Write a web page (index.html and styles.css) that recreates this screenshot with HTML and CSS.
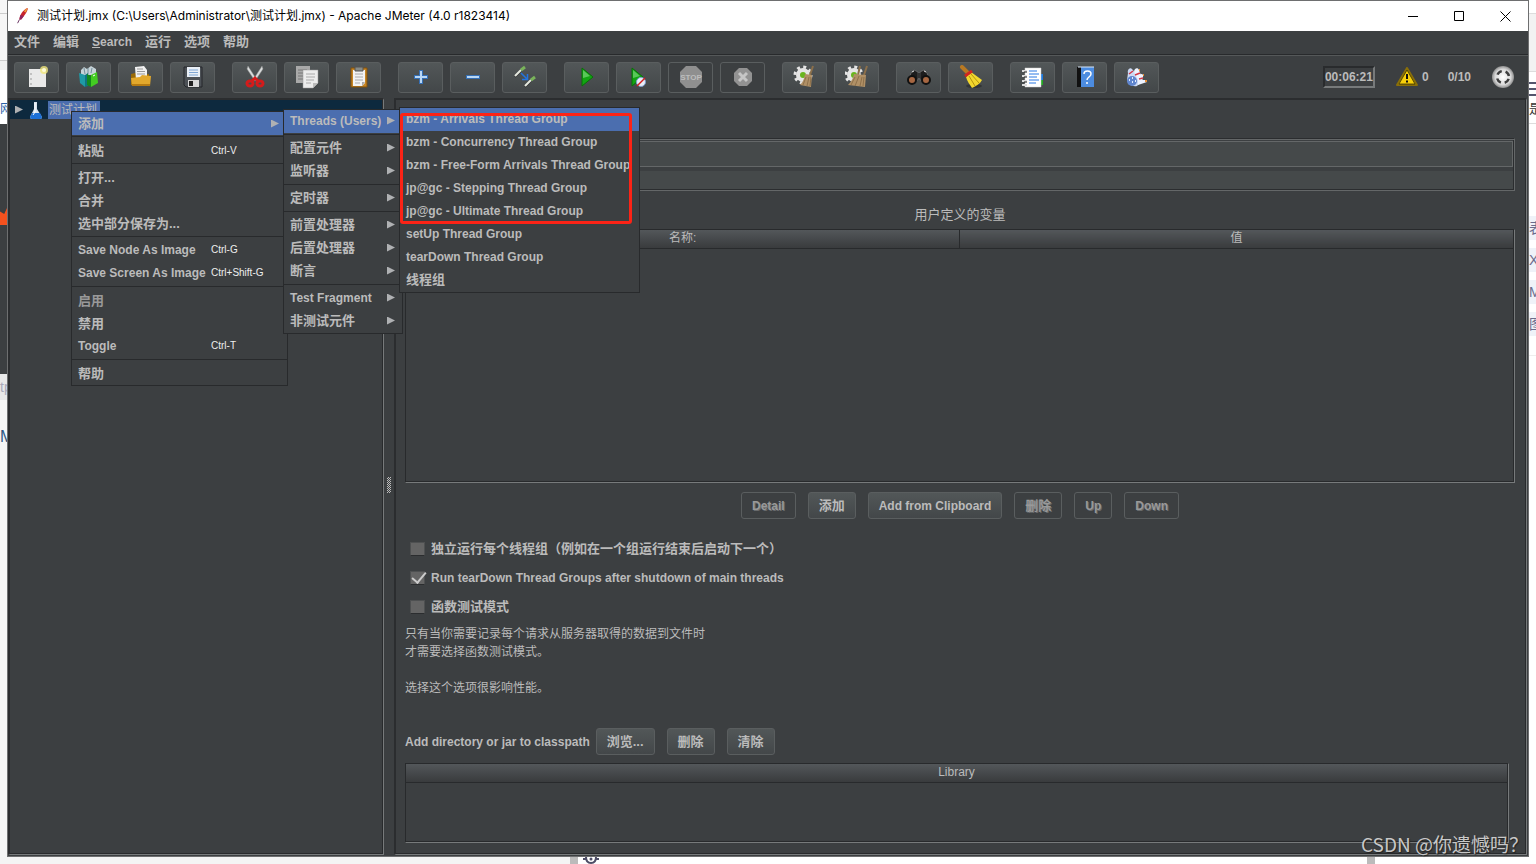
FILE: index.html
```html
<!DOCTYPE html>
<html lang="zh-CN">
<head>
<meta charset="utf-8">
<title>测试计划.jmx - Apache JMeter</title>
<link rel="stylesheet" href="styles.css">
</head>
<body>
<div class="desktop">
  <div class="strip-left">
    <div class="sl-top"></div>
    <div class="sl-mid"></div>
    <div class="sl-cut">网</div>
    <div class="sl-dark"><i class="flame"></i></div>
    <div class="sl-grey">tp</div>
    <div class="sl-page">M</div>
  </div>

  <div class="window">
    <header class="titlebar">
      <svg class="feather" viewBox="0 0 16 20"><path d="M13 1c1 1-1 5-4 9L6 14l-2 0C4 9 8 3 13 1z" fill="#c8232c"/><path d="M13 1c-2 1-3 2-4 4l2 1c1-2 2-4 2-5z" fill="#ef9a35"/><path d="M5 9l-1 5 2 0 3-4z" fill="#8e2460"/><path d="M4 14l-2 4" stroke="#5b2355" fill="none"/></svg>
      <span class="title">测试计划.jmx (C:\Users\Administrator\测试计划.jmx) - Apache JMeter (4.0 r1823414)</span>
      <button class="wbtn" aria-label="Minimize"><svg viewBox="0 0 11 11"><path d="M0 5.500h10" stroke="#000"/></svg></button>
      <button class="wbtn" aria-label="Maximize"><svg viewBox="0 0 11 11"><path d="M.5.500h9v9h-9z" stroke="#000" fill="none"/></svg></button>
      <button class="wbtn" aria-label="Close"><svg viewBox="0 0 11 11"><path d="M.5.500l10 10M10.500.500l-10 10" stroke="#000"/></svg></button>
    </header>

    <nav class="menubar">
      <button class="zh">文件</button><button class="zh">编辑</button><button><u>S</u>earch</button><button class="zh">运行</button><button class="zh">选项</button><button class="zh">帮助</button>
    </nav>

    <div class="toolbar">
      <div class="tgroup">
        <button class="tool" aria-label="New"><svg viewBox="0 0 24 24"><path d="M4 4h17v18H4z" fill="#e9e9e9"/><path d="M6 8v2M6 13v2M6 18v2" stroke="#999"/><circle cx="19" cy="5" r="4" fill="#f0e67c" opacity=".8"/><circle cx="19" cy="5" r="2" fill="#fffbd8"/></svg></button>
        <button class="tool" aria-label="Templates"><svg viewBox="0 0 24 24"><path d="M4 5l3-3 3 2 4-3 5 3v6H4z" fill="#c6d3d8"/><path d="M7 3l1 6M11 3v6M15 3l-1 5" stroke="#75909b"/><path d="M2 8l6 2v12l-5-4z" fill="#1f9aa6"/><path d="M8 10l3-2v13l-3 1z" fill="#117482"/><path d="M10 9l4 2v11l-4-2z" fill="#148b1d"/><path d="M14 10l6-3 1 11-7 4z" fill="#43cc22"/><path d="M16 11l2-1" stroke="#fff"/></svg></button>
        <button class="tool" aria-label="Open"><svg viewBox="0 0 24 24"><path d="M2 9l4-1 14 1v11H2z" fill="#9a6a08"/><path d="M6 2l9-1 3 4v10H7z" fill="#f2f2f2"/><path d="M8 4h6M8 6.500h8M8 9h8" stroke="#999"/><path d="M2 13l9-1 2-2 9 1-1 10H3z" fill="#e2a82c"/><path d="M3 20h18" stroke="#b67b12" stroke-width="2"/></svg></button>
        <button class="tool" aria-label="Save"><svg viewBox="0 0 24 24"><path d="M3 2h18v20H5l-2-2z" fill="#4c5156" stroke="#24272a"/><path d="M6 2h13v10H6z" fill="#e9eff6"/><path d="M8 5h9M8 7.500h9M8 10h9" stroke="#7fa6d4"/><path d="M7 15h11v7H7z" fill="#dadada"/><path d="M8 16h4v5H8z" fill="#222"/></svg></button>
      </div>
      <div class="tgroup">
        <button class="tool" aria-label="Cut"><svg viewBox="0 0 24 24"><path d="M5 1l9 14-2 1L4 4zM19 1l-9 14 2 1 8-12z" fill="#d9dcdc" stroke="#888" stroke-width=".5"/><g fill="none" stroke="#d41b1b" stroke-width="3"><ellipse cx="7" cy="18.500" rx="3" ry="2.500"/><ellipse cx="17" cy="18.500" rx="3" ry="2.500"/><path d="M9 16l3-3 3 3"/></g></svg></button>
        <button class="tool" aria-label="Copy"><svg viewBox="0 0 24 24"><path d="M1 1h14v17H1z" fill="#a9a9a9"/><path d="M3 5h9M3 8h5M3 11h5M3 14h5" stroke="#777"/><path d="M8 5h15v13l-5 5H8z" fill="#ececec" stroke="#999" stroke-width=".5"/><path d="M11 9h9M11 12h9M11 15h8M11 18h5" stroke="#aaa"/><path d="M18 23v-5h5z" fill="#bbb"/></svg></button>
        <button class="tool" aria-label="Paste"><svg viewBox="0 0 24 24"><path d="M4 3h16v19H4z" fill="#c68524" stroke="#80500d"/><path d="M6 5h12v13l-3 3H6z" fill="#f3f3f3"/><path d="M8 2h8v4H8z" fill="#878b87" stroke="#555"/><path d="M8 9h8M8 12h8M8 15h8M8 18h5" stroke="#aaa"/><path d="M15 21v-4h3z" fill="#aaa"/></svg></button>
      </div>
      <div class="tgroup">
        <button class="tool" aria-label="Expand"><svg viewBox="0 0 24 24"><path d="M12 5v14M5 12h14" stroke="#356fb5" stroke-width="4"/><path d="M12 6v12M6 12h12" stroke="#b9d7f5" stroke-width="2"/></svg></button>
        <button class="tool" aria-label="Collapse"><svg viewBox="0 0 24 24"><path d="M5 12h14" stroke="#356fb5" stroke-width="4"/><path d="M6 12h12" stroke="#b9d7f5" stroke-width="2"/></svg></button>
        <button class="tool" aria-label="Toggle"><svg viewBox="0 0 24 24"><path d="M2 12l6-6M12 22l6-6" stroke="#222" stroke-width="1.500"/><path d="M2 11l6-6M12 21l6-6" stroke="#e5e8df" stroke-width="2"/><path d="M8 5l4-3M18 15l4-3" stroke="#79b35a" stroke-width="3"/><path d="M8 8l6 6M14.500 9v5.500H9" stroke="#2474df" stroke-width="1.500" fill="none"/></svg></button>
      </div>
      <div class="tgroup">
        <button class="tool" aria-label="Start"><svg viewBox="0 0 24 24"><path d="M7 3l11 9L7 21z" fill="#12a512" stroke="#087008"/><path d="M8 5l7 6-7 2z" fill="#59c759"/></svg></button>
        <button class="tool" aria-label="Start no pauses"><svg viewBox="0 0 24 24"><path d="M5 3l11 9-11 9z" fill="#12a512" stroke="#087008"/><path d="M6 5l7 6-7 2z" fill="#59c759"/><circle cx="14" cy="17" r="4.500" fill="#e8eef8" stroke="#7e9ccc"/><path d="M10 21l8-8" stroke="#d61d1d" stroke-width="1.500"/></svg></button>
        <button class="tool" disabled aria-label="Stop"><svg viewBox="0 0 24 24"><path d="M7 1h10l6 6v10l-6 6H7l-6-6V7z" fill="#8f8f8f"/><text x="12" y="15" text-anchor="middle" class="stoptext">STOP</text></svg></button>
        <button class="tool" disabled aria-label="Shutdown"><svg viewBox="0 0 24 24"><path d="M8 3h8l5 5v8l-5 5H8l-5-5V8z" fill="#929292"/><path d="M8 8l8 8M16 8l-8 8" stroke="#c6c6c6" stroke-width="3"/></svg></button>
      </div>
      <div class="tgroup">
        <button class="tool" aria-label="Clear"><svg viewBox="0 0 24 24"><circle cx="10" cy="10" r="7" fill="#e5e5e5"/><circle cx="10" cy="10" r="8" fill="none" stroke="#e5e5e5" stroke-width="3" stroke-dasharray="3 3.280"/><circle cx="10" cy="10" r="3" fill="#69b51e"/><path d="M20 1l-3 9" stroke="#8b6f4a" stroke-width="2"/><path d="M12 9l7 1-1 12L7 20c4-4 4-7 5-11z" fill="#b09066"/><path d="M13 12l-3 8M16 12l-2 9M18 12l-1 9" stroke="#80633f" stroke-width=".7"/></svg></button>
        <button class="tool" aria-label="Clear all"><svg viewBox="0 0 24 24"><circle cx="9" cy="10" r="7" fill="#e5e5e5"/><circle cx="9" cy="10" r="8" fill="none" stroke="#e5e5e5" stroke-width="3" stroke-dasharray="3 3.280"/><circle cx="9" cy="10" r="3" fill="#69b51e"/><path d="M15 1l-2 9M22 1l-3 9" stroke="#8b6f4a" stroke-width="2"/><path d="M9 9l12 1-1 12L3 20c4-4 5-7 6-11z" fill="#b09066"/><path d="M10 12l-4 8M14 11l-4 10M17 12l-2 9M19 12l-1 9" stroke="#80633f" stroke-width=".7"/></svg></button>
      </div>
      <div class="tgroup">
        <button class="tool" aria-label="Search"><svg viewBox="0 0 24 24"><path d="M4 8l3-3 4 2v8H2zM20 8l-3-3-4 2v8h9z" fill="#1d1d1d" stroke="#777" stroke-width=".7"/><path d="M10 8h4v5h-4z" fill="#333"/><circle cx="5" cy="15" r="4" fill="#a76742" stroke="#111" stroke-width="2"/><circle cx="19" cy="15" r="4" fill="#a76742" stroke="#111" stroke-width="2"/><path d="M5 7l2-1M17 6l2 1" stroke="#ddd"/></svg></button>
        <button class="tool" aria-label="Reset search"><svg viewBox="0 0 24 24"><ellipse cx="15" cy="21" rx="8" ry="2" fill="#333638"/><path d="M3 2l6 6" stroke="#b87923" stroke-width="4" stroke-linecap="round"/><path d="M7 12l5-5 11 8c-2 4-6 6-10 8-2-3-5-7-6-11z" fill="#f2d72d"/><path d="M10 11l6 10M12 9l8 9" stroke="#b5930d"/><path d="M6 11l7-5" stroke="#cf261f" stroke-width="3"/></svg></button>
      </div>
      <div class="tgroup">
        <button class="tool" aria-label="Function helper"><svg viewBox="0 0 24 24"><path d="M18 9h4v6h-4z" fill="#1e7be0"/><path d="M18 15h4v5h-4z" fill="#22a922"/><path d="M4 3h16v19H4z" fill="#fff" stroke="#ccc" stroke-width=".5"/><path d="M8 6h8M8 9h10M8 12h8M8 15h10M8 18h7" stroke="#2a79e4"/><path d="M1 6h5M1 11h5M1 16h5M1 20h5" stroke="#ddd" stroke-width="2"/><path d="M3 7h3M3 12h3M3 17h3" stroke="#222"/></svg></button>
        <button class="tool" aria-label="Help"><svg viewBox="0 0 24 24"><path d="M4 2h4v20H4z" fill="#111"/><path d="M8 2h13v20H8z" fill="#4c8ce0"/><path d="M5 2h16" stroke="#d9e6f5"/><path d="M11 9c0-4 7-4 7 0 0 3-4 3-4 6M14 17v2" stroke="#fff" stroke-width="1.500" fill="none"/></svg></button>
        <button class="tool" aria-label="What's new"><svg viewBox="0 0 24 24"><path d="M3 8c-1-3 2-6 4-4l10 12-5 5c-5 1-9-2-10-6z" fill="#cbd9f4"/><path d="M9 7c0-4 4-5 5-2l4 11-5-1zM13 12c2-4 6-4 5 0l-1 5-4-2zM13 15l9 0 0 2-9 3z" fill="#eef3ff"/><circle cx="7" cy="16" r="5" fill="#6086ce"/><path d="M4 15h1M7 13h1M7 17h1M10 16h1" stroke="#e2edff" stroke-width="2"/><path d="M4 9l4-3M10 10l5-2M14 14l4-1" stroke="#d33a49" stroke-width="1.500"/><path d="M20 16h2M14 5h1M18 10h1" stroke="#e88d35" stroke-width="2"/></svg></button>
      </div>
      <div class="status">
        <span class="timer">00:06:21</span>
        <span class="warn"><svg viewBox="0 0 22 20"><path d="M11 1l10 17H1z" fill="#f8cf0a" stroke="#8a6f08" stroke-width="2" stroke-linejoin="round"/><path d="M11 3l8 14H3z" fill="none" stroke="#3a3200" stroke-width=".8"/><path d="M11 7v5M11 13.500v2" stroke="#111" stroke-width="2"/></svg>0</span>
        <span class="threads">0/10</span>
        <svg class="globe" viewBox="0 0 22 22"><defs><radialGradient id="ball"><stop offset="0" stop-color="#fff"/><stop offset=".7" stop-color="#dadada"/><stop offset="1" stop-color="#8f8f8f"/></radialGradient></defs><circle cx="11" cy="11" r="11" fill="url(#ball)"/><circle cx="11" cy="11" r="6" fill="none" stroke="#3d3d3d" stroke-width="2.500" stroke-dasharray="5.400 4.020" stroke-dashoffset="-2"/></svg>
      </div>
    </div>

    <div class="split">
      <aside class="tree">
        <div class="node">
          <i class="arrow"></i>
          <svg class="flask" viewBox="0 0 14 18"><path d="M5 1h3v7l5 8q0 2-2 2H3q-2 0-2-2l4-8z" fill="#d9e3ed"/><path d="M3 12h8l2 4q0 2-2 2H3q-2 0-2-2z" fill="#1d70d6"/><path d="M6 2v9l-2 3" stroke="#fff" fill="none"/></svg>
          <span class="nodename">测试计划</span>
        </div>
      </aside>
      <div class="divider"><i class="grip"></i></div>
      <main class="panel">
        <div class="namebox">
          <input type="text" aria-label="名称">
          <input type="text" class="plain" aria-label="注释">
        </div>
        <h2 class="caption">用户定义的变量</h2>
        <div class="grid vars">
          <table><thead><tr><th>名称:</th><th>值</th></tr></thead></table>
        </div>
        <div class="actions">
          <button class="btn" disabled>Detail</button>
          <button class="btn zh">添加</button>
          <button class="btn">Add from Clipboard</button>
          <button class="btn zh" disabled>删除</button>
          <button class="btn" disabled>Up</button>
          <button class="btn" disabled>Down</button>
        </div>
        <div class="checks">
          <label class="zh"><input type="checkbox">独立运行每个线程组（例如在一个组运行结束后启动下一个）</label>
          <label><input type="checkbox" checked>Run tearDown Thread Groups after shutdown of main threads</label>
          <label class="zh"><input type="checkbox">函数测试模式</label>
        </div>
        <p class="note">只有当你需要记录每个请求从服务器取得的数据到文件时<br>才需要选择函数测试模式。<br><br>选择这个选项很影响性能。</p>
        <div class="classpath">
          <span>Add directory or jar to classpath</span>
          <button class="btn zh">浏览...</button>
          <button class="btn zh">删除</button>
          <button class="btn zh">清除</button>
        </div>
        <div class="grid library">
          <table><thead><tr><th>Library</th></tr></thead></table>
        </div>
      </main>
    </div>
  </div>

  <div class="strip-right">
    <div class="sr-tab"></div>
    <div class="sr-lines"><i></i><i></i><i></i></div>
    <div class="sr-word">是</div>
    <div class="sr-gap"></div>
    <div class="sr-tags"><span>表</span><span>X</span><span>M</span><span>图</span></div>
    <div class="sr-rest"></div>
  </div>

  <div class="strip-bottom">
    <i class="sb-grey"></i><i class="sb-bar"></i>
    <svg viewBox="0 0 16 7"><path d="M0 2h3M13 2h3M3 0q0 6 5 6t5-6" stroke="#4d4d66" stroke-width="2" fill="none"/><circle cx="8" cy="2" r="1.500" fill="#4d4d66"/></svg>
    <i class="sb-space"></i><i class="sb-bar"></i><i class="sb-end"></i>
  </div>

  <div class="popup context" role="menu">
    <button class="zh on">添加<i class="arrow"></i></button><hr>
    <button class="zh">粘贴<kbd>Ctrl-V</kbd></button><hr>
    <button class="zh">打开...</button>
    <button class="zh">合并</button>
    <button class="zh">选中部分保存为...</button><hr>
    <button>Save Node As Image<kbd>Ctrl-G</kbd></button>
    <button>Save Screen As Image<kbd>Ctrl+Shift-G</kbd></button><hr>
    <button class="zh" disabled>启用</button>
    <button class="zh">禁用</button>
    <button>Toggle<kbd>Ctrl-T</kbd></button><hr>
    <button class="zh">帮助</button>
  </div>

  <div class="popup add" role="menu">
    <button class="on">Threads (Users)<i class="arrow"></i></button><hr>
    <button class="zh">配置元件<i class="arrow"></i></button>
    <button class="zh">监听器<i class="arrow"></i></button><hr>
    <button class="zh">定时器<i class="arrow"></i></button><hr>
    <button class="zh">前置处理器<i class="arrow"></i></button>
    <button class="zh">后置处理器<i class="arrow"></i></button>
    <button class="zh">断言<i class="arrow"></i></button><hr>
    <button>Test Fragment<i class="arrow"></i></button>
    <button class="zh">非测试元件<i class="arrow"></i></button>
  </div>

  <div class="popup groups" role="menu">
    <button class="on">bzm - Arrivals Thread Group</button>
    <button>bzm - Concurrency Thread Group</button>
    <button>bzm - Free-Form Arrivals Thread Group</button>
    <button>jp@gc - Stepping Thread Group</button>
    <button>jp@gc - Ultimate Thread Group</button>
    <button>setUp Thread Group</button>
    <button>tearDown Thread Group</button>
    <button class="zh">线程组</button>
  </div>
  <div class="marker"></div>
  <div class="watermark">CSDN @你遗憾吗？</div>
</div>
</body>
</html>
```

FILE: styles.css
```css
* { box-sizing: border-box; }
html, body { height: 100%; margin: 0; }
body {
  background: #fff;
  color: #bbb;
  font: bold 12px/18px "Liberation Sans", "Noto Sans CJK SC", sans-serif;
  overflow: hidden;
}
button { font: inherit; color: inherit; background: none; border: 0; padding: 0; margin: 0; }
svg { display: block; flex: none; }
i { font-style: normal; }
.zh { font-size: 13px; }

.desktop {
  position: relative;
  height: 100vh;
  display: grid;
  grid-template-columns: 7px minmax(0, 1fr) 7px;
  grid-template-rows: minmax(0, 1fr) 7px;
}

/* page visible behind the window */
.strip-left, .strip-right { display: flex; flex-direction: column; overflow: hidden; font-weight: normal; }
.sl-top { height: 14px; border-bottom: 1px solid #ccc; background: #f6f6f6; }
.sl-mid { height: 86px; background: linear-gradient(#f6f6f6 46px, #ccc 46px, #ccc 47px, #f0f0f0 47px, #f0f0f0 56px, #fff 56px); }
.sl-cut { height: 24px; color: #2b63a8; font-size: 12px; }
.sl-dark { height: 250px; background: #3c3f41; padding-top: 84px; }
.flame { display: block; height: 17px; background: #f4511e; clip-path: polygon(0 20%, 60% 35%, 100% 0, 100% 100%, 0 100%); }
.sl-grey { height: 26px; line-height: 26px; background: #e8e8e8; color: #aab; font-size: 14px; }
.sl-page { flex: 1; background: #f5f5f5; color: #2d5784; font-size: 16px; padding-top: 28px; }

.strip-right { color: #6b6b8c; }
.sr-tab { height: 72px; border-bottom: 1px solid #ddd; background: linear-gradient(#fff 13px, #ddd 13px, #ddd 14px, #f2f2f2 14px); }
.sr-lines { height: 28px; padding-top: 10px; display: flex; flex-direction: column; gap: 4px; }
.sr-lines i { height: 2px; background: #55556d; flex: none; }
.sr-word { height: 24px; border-bottom: 1px solid #ddd; font-size: 13px; color: #333; }
.sr-gap { height: 92px; }
.sr-tags { display: flex; flex-direction: column; gap: 8px; font-size: 14px; line-height: 24px; }
.sr-tags span { height: 24px; background: #eff2f8; }
.sr-rest { height: 20px; border-bottom: 1px solid #eee; }

.strip-bottom { grid-column: 1 / 4; display: flex; overflow: hidden; }
.strip-bottom svg { width: 16px; height: 7px; margin-left: 5px; }
.sb-grey { width: 570px; background: #f4f4f4; }
.sb-bar { width: 8px; background: #bbb; }
.sb-space { flex: 1; }
.sb-end { width: 161px; }

/* window frame */
.window {
  display: flex;
  flex-direction: column;
  border: 1px solid #6e6f70;
  background: #3c3f41;
  min-width: 0;
}
.titlebar { height: 30px; flex: none; display: flex; align-items: center; background: #fff; color: #000; font-weight: normal; }
.feather { width: 16px; height: 18px; margin-left: 7px; }
.title { flex: 1; padding-left: 6px; font-family: Inter, "Noto Sans CJK SC", sans-serif; font-size: 12px; white-space: nowrap; }
.wbtn { width: 46px; height: 30px; display: flex; align-items: center; justify-content: center; }
.wbtn svg { width: 11px; height: 11px; }

.menubar { height: 24px; flex: none; display: flex; align-items: center; gap: 13px; padding: 0 0 2px 6px; border-bottom: 1px solid #282a2c; }
.toolbar { height: 43px; flex: none; display: flex; align-items: center; gap: 17px; padding: 0 14px 0 6px; border-top: 1px solid #555859; }
.tgroup { display: flex; gap: 7px; }
.tool {
  width: 45px;
  height: 31px;
  display: flex;
  align-items: center;
  justify-content: center;
  border: 1px solid #5a5e5f;
  border-radius: 3px;
  background: linear-gradient(#525758, #434749);
}
.tool:disabled { background: none; }
.tool svg { width: 24px; height: 24px; }
.stoptext { font: bold 8px "Liberation Sans", sans-serif; fill: #bdbdbd; }
.status { margin-left: auto; display: flex; align-items: center; }
.timer { border: 2px solid; border-color: #292b2d #777a7b #777a7b #292b2d; height: 22px; }
.warn { display: flex; align-items: center; gap: 4px; margin-left: 21px; }
.warn svg { width: 22px; height: 20px; }
.threads { margin-left: 19px; }
.globe { width: 22px; height: 22px; margin-left: 21px; }

/* split pane */
.split { flex: 1; min-height: 0; display: flex; }
.tree { width: 376px; flex: none; border: 2px solid #2b2d2f; border-right: 1px solid #777a7b; border-bottom: 1px solid #777a7b; box-shadow: inset -1px -1px #282a2c; margin-bottom: 1px; }
.node { height: 19px; margin-right: 1px; display: flex; align-items: center; background: #0d293e; padding-left: 5px; font-weight: normal; }
.arrow { width: 8px; height: 8px; flex: none; background: #afb1b3; clip-path: polygon(0 0, 100% 50%, 0 100%); }
.flask { width: 14px; height: 18px; margin-left: 6px; }
.nodename { margin-left: 5px; padding: 0 3px 0 1px; background: #4b6eaf; }
.divider { width: 10px; flex: none; display: flex; align-items: center; justify-content: center; padding-top: 16px; }
.grip { width: 4px; height: 16px; background: repeating-conic-gradient(#bbb 0 25%, #3c3f41 0 50%) 0 0 / 2px 2px; }
.panel {
  flex: 1;
  min-width: 0;
  display: flex;
  flex-direction: column;
  border: 2px solid #2b2d2f;
  border-right: 1px solid #777a7b;
  border-bottom: 1px solid #777a7b;
  box-shadow: inset -1px -1px #282a2c;
  margin: 0 1px 1px 0;
  padding: 38px 11px 11px 9px;
}
.namebox { display: flex; flex-direction: column; gap: 4px; padding: 2px 1px 1px 0; border: 1px solid #646768; border-top-color: #2b2d2f; box-shadow: inset 0 1px #646768, inset -1px -1px #2b2d2f; }
.namebox input { height: 26px; width: 100%; border: 1px solid #646768; background: #45494a; color: #bbb; }
.namebox .plain { height: 18px; border: 0; }
.caption { margin: 15px 0 5px; font-size: 13px; line-height: 18px; font-weight: normal; text-align: center; }
.grid { border: 1px solid #282a2c; border-right-color: #777a7b; border-bottom-color: #777a7b; box-shadow: inset -1px -1px #282a2c; }
.grid table { width: 100%; border-collapse: collapse; table-layout: fixed; }
.grid th { height: 18px; padding: 0; font-weight: normal; line-height: 17px; border-bottom: 1px solid #282a2c; border-right: 1px solid #282a2c; background: linear-gradient(#53575a, #393b3d); }
.vars { flex: 1; min-height: 0; }
.actions { display: flex; justify-content: center; gap: 12px; margin-top: 9px; }
.btn { height: 27px; flex: none; padding: 0 10px; border: 1px solid #5a5e5f; border-radius: 3px; background: linear-gradient(#525758, #434749); }
.btn:disabled { background: none; color: #999; text-shadow: 1px 1px #686a6c; }
.checks { display: flex; flex-direction: column; align-items: flex-start; gap: 11px; margin-top: 21px; padding-left: 5px; }
.checks label { display: flex; align-items: center; gap: 6px; }
.checks input { appearance: none; width: 15px; height: 14px; margin: 0; border: 1px solid #4e5051; border-bottom-color: #2b2d2f; background: #646464; position: relative; }
.checks input:checked::after { content: ""; position: absolute; left: 4px; top: -3px; width: 6px; height: 12px; border: solid #ccc; border-width: 0 2px 2px 0; transform: rotate(40deg); }
.note { margin: 9px 0 31px; font-weight: normal; }
.classpath { display: flex; align-items: center; gap: 12px; }
.classpath span { margin-right: -6px; }
.library { height: 80px; flex: none; margin: 8px 6px 0 0; }

/* popup menus */
.popup { position: absolute; border: 1px solid #282a2c; background: #3c3f41; }
.popup button { display: flex; align-items: center; width: 100%; height: 23px; padding: 0 7px 2px 6px; text-align: left; white-space: nowrap; }
.popup button:disabled { color: #999; }
.popup hr { height: 1px; margin: 1px 0 2px; border: 0; background: #282a2c; }
.popup .on { background: #4b6eaf; }
.popup .arrow { margin-left: auto; }
.popup kbd { font: normal 10px "Liberation Sans", sans-serif; color: #eee; width: 70px; margin-left: auto; }
.context { left: 71px; top: 111px; width: 217px; }
.context button { padding-right: 6px; }
.context .zh { padding-bottom: 0; }
.context .on { padding-right: 5px; width: 212px; }
.add { left: 283px; top: 109px; width: 120px; }
.groups { left: 399px; top: 107px; width: 241px; }
.marker { position: absolute; left: 400px; top: 113px; width: 232px; height: 111px; border: 3px solid #fc2316; border-radius: 3px; }
.watermark { position: absolute; right: 8px; bottom: 8px; font: normal 19px/24px "Noto Sans CJK SC", sans-serif; color: #c8c8c8; text-shadow: 1px 1px 1px #222; }
```
